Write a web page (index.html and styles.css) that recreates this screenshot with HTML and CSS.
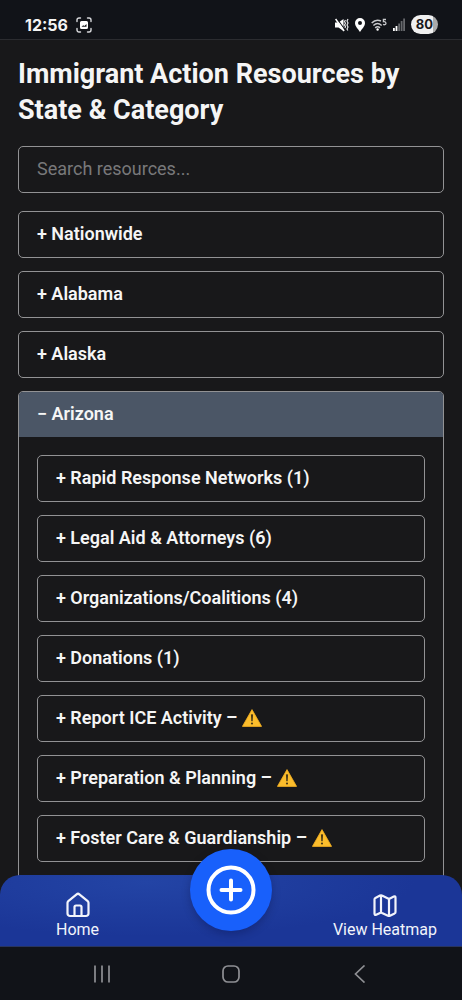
FILE: index.html
```html
<!DOCTYPE html>
<html lang="en">
<head>
<meta charset="utf-8">
<meta name="viewport" content="width=device-width, initial-scale=1">
<title>Immigrant Action Resources</title>
<link rel="stylesheet" href="styles.css">
</head>
<body>
<svg class="defs" aria-hidden="true">
  <symbol id="warning" viewBox="0 0 20 18">
    <path d="M10 .6 19.6 17.4H.4Z" fill="#fbbd2c" stroke="#f6b021" stroke-width=".8" stroke-linejoin="round"/>
    <path d="M8.9 5.6Q10 4.8 11.1 5.6L10.7 12.2H9.3Z" fill="#4a3a18"/>
    <circle cx="10" cy="14.5" r="1.1" fill="#4a3a18"/>
  </symbol>
</svg>
<div class="app">
  <header class="status">
    <div class="status-group">
      <span class="clock">12:56</span>
      <svg width="16" height="16" viewBox="0 0 16 16" fill="none" stroke="#d8d9dc" stroke-width="1.4" stroke-linecap="round">
        <path d="M1 4.5V3a2 2 0 0 1 2-2h1.500M11.500 1H13a2 2 0 0 1 2 2v1.500M15 11.500V13a2 2 0 0 1-2 2h-1.500M4.500 15H3a2 2 0 0 1-2-2v-1.500"/>
        <path d="M5.500 4h5A1.500 1.500 0 0 1 12 5.500v5A1.500 1.500 0 0 1 10.500 12h-5A1.500 1.500 0 0 1 4 10.500v-5A1.500 1.500 0 0 1 5.500 4Z" fill="#fff" stroke="none"/>
        <path d="m5.500 9.700 1.700-1.500 1.200.8 2.100-2v2.700Z" fill="#15171b" stroke="none"/>
      </svg>
    </div>
    <div class="status-group status-icons">
      <svg width="14" height="14" viewBox="0 0 14 14">
        <path d="M0 4.500h3.500L8.500 1v12L3.500 9.500H0Z" fill="#fff"/>
        <path d="m1.800 .5 8 11" stroke="#111318" stroke-width="1.200"/>
        <path d="m.6 1 8.500 12" stroke="#fff" stroke-width="1.500"/>
        <path d="m10.500 2-1 1.500 1 1.700-1 1.700 1 1.700-.5 1.500M13 1l-1 2 1 2-1 2 1 2-1 2 .8 1.500" fill="none" stroke="#e4e4e6" stroke-width="1.200"/>
      </svg>
      <svg width="10" height="14" viewBox="0 0 10 14"><path fill="#fff" fill-rule="evenodd" d="M5 0a5 5 0 0 1 5 5c0 3.500-3.200 6-5 9-1.800-3-5-5.500-5-9a5 5 0 0 1 5-5Zm0 3a2 2 0 1 0 0 4 2 2 0 0 0 0-4Z"/></svg>
      <svg width="16" height="14" viewBox="0 0 16 14" fill="none" stroke="#c8c9cc" stroke-width="1.500">
        <path d="M.7 5C3.500 2 7 1.600 10 3M2.400 7.500C5 5 8 5 10.700 7.500M4.200 9.900c1.600-1.500 3.200-1.500 4.800 0"/>
        <circle cx="6.600" cy="11.500" r="1.200" fill="#fff" stroke="none"/>
        <path d="M15 1.500h-2.600v2.200c2.800-.7 3.400 2.700 1.300 3-.7.100-1.200-.1-1.600-.5" stroke-width="1.300"/>
      </svg>
      <svg width="12" height="13" viewBox="0 0 12 13">
        <path d="M0 10h1.800v3H0ZM2.600 8h1.800v5H2.600Z" fill="#fff"/>
        <path d="M5.200 5.500H7V13H5.200ZM7.700 3h1.800v10H7.700ZM10.200.5H12V13h-1.800Z" fill="#66686c"/>
      </svg>
      <span class="battery">80</span>
    </div>
  </header>

  <main class="content">
    <h1>Immigrant Action Resources by State &amp; Category</h1>
    <input class="search" type="search" placeholder="Search resources..." aria-label="Search resources">
    <div class="list">
      <button class="row" type="button">+ Nationwide</button>
      <button class="row" type="button">+ Alabama</button>
      <button class="row" type="button">+ Alaska</button>
      <section class="state">
        <button class="state-head" type="button" aria-expanded="true">− Arizona</button>
        <div class="list categories">
          <button class="row" type="button">+ Rapid Response Networks (1)</button>
          <button class="row" type="button">+ Legal Aid &amp; Attorneys (6)</button>
          <button class="row" type="button">+ Organizations/Coalitions (4)</button>
          <button class="row" type="button">+ Donations (1)</button>
          <button class="row" type="button">+ Report ICE Activity – <svg class="warn" role="img" aria-label="Warning"><use href="#warning"/></svg></button>
          <button class="row" type="button">+ Preparation &amp; Planning – <svg class="warn" role="img" aria-label="Warning"><use href="#warning"/></svg></button>
          <button class="row" type="button">+ Foster Care &amp; Guardianship – <svg class="warn" role="img" aria-label="Warning"><use href="#warning"/></svg></button>
        </div>
      </section>
    </div>
  </main>

  <footer class="bottom">
    <nav class="tabs">
      <a class="tab" href="#home">
        <svg width="26" height="26" viewBox="0 0 26 26" fill="none" stroke="currentColor" stroke-width="2.200" stroke-linejoin="round" stroke-linecap="round">
          <path d="M2.500 10.800q0-1 .8-1.700l8.300-6.800q1.400-1.100 2.800 0l8.300 6.800q.8.700.8 1.700v10.700a2.500 2.500 0 0 1-2.500 2.500H5a2.500 2.500 0 0 1-2.500-2.500Z"/>
          <path d="M9.500 24v-9a1.500 1.500 0 0 1 1.500-1.500h4a1.500 1.500 0 0 1 1.500 1.500v9"/>
        </svg>
        <span>Home</span>
      </a>
      <a class="tab" href="#heatmap">
        <svg width="26" height="26" viewBox="0 0 26 26" fill="none" stroke="currentColor" stroke-width="2.200" stroke-linejoin="round" stroke-linecap="round">
          <path d="M16 6.400q1 .5 2 0l3.800-1.900q1.700-.6 1.700 1.200v14.200q0 1-.9 1.500L18 23.700q-1 .5-2 0l-6-2.800q-1-.5-2 0l-3.800 1.900q-1.700.6-1.700-1.200V7.400q0-1 .9-1.500L8 3.600q1-.5 2 0ZM9 3.400v17M17 6.700v17"/>
        </svg>
        <span>View Heatmap</span>
      </a>
      <button class="fab" type="button" aria-label="Add resource">
        <svg width="50" height="50" viewBox="0 0 50 50" fill="none" stroke="#fff" stroke-width="4" stroke-linecap="round">
          <circle cx="25" cy="25" r="22.500"/>
          <path d="M25 15.500v19M15.500 25h19"/>
        </svg>
      </button>
    </nav>
    <div class="system">
      <button type="button" aria-label="Recent apps"><svg width="18" height="18" viewBox="0 0 18 18" stroke="#8f9094" stroke-width="1.700"><path d="M2 .5v17M9 .5v17M16 .5v17"/></svg></button>
      <button type="button" aria-label="Home screen"><svg width="18" height="18" viewBox="0 0 18 18" fill="none" stroke="#8f9094" stroke-width="1.700"><rect x="1" y="1" width="16" height="16" rx="5"/></svg></button>
      <button type="button" aria-label="Back"><svg width="18" height="18" viewBox="0 0 18 18" fill="none" stroke="#8f9094" stroke-width="1.700"><path d="M13.500.5 4.500 9l9 8.500"/></svg></button>
    </div>
  </footer>
</div>
</body>
</html>
```
FILE: styles.css
```css
* {
  box-sizing: border-box;
}

body {
  margin: 0;
  background: #18181a;
  color: #f5f5f5;
  font-family: Roboto, "Liberation Sans", sans-serif;
}

button,
input {
  font: inherit;
  color: inherit;
}

.defs {
  position: absolute;
  width: 0;
  height: 0;
}

.app {
  display: flex;
  flex-direction: column;
  height: 100vh;
}

.status {
  display: flex;
  flex: none;
  align-items: center;
  justify-content: space-between;
  padding: 12px 24px 2px 25px;
  height: 40px;
  background: #111318;
  border-bottom: 1px solid #2b2c30;
}

.status-group {
  display: flex;
  align-items: center;
  gap: 8px;
}

.status-icons {
  gap: 6px;
}

.clock {
  font-family: Inter, Roboto, sans-serif;
  font-size: 16px;
  font-weight: 700;
}

.battery {
  padding: 0 5px;
  border-radius: 10px;
  background: linear-gradient(90deg, #f0f0f0 80%, #aaa 80%);
  color: #18181a;
  font-family: Inter, Roboto, sans-serif;
  font-size: 13px;
  font-weight: 700;
  line-height: 19px;
}

.content {
  flex: 1;
  min-height: 0;
  overflow: hidden;
  padding: 16px 18px 0;
}

h1 {
  margin: 0 0 18px;
  font-size: 27px;
  font-weight: 700;
  line-height: 36px;
}

.search,
.row {
  display: block;
  width: 100%;
  height: 47px;
  padding: 0 18px 2px;
  border: 1px solid #929294;
  border-radius: 5px;
  background: transparent;
  font-size: 18px;
  text-align: left;
}

.search {
  margin-bottom: 18px;
  appearance: none;
}

.search::placeholder {
  color: #78787a;
  opacity: 1;
}

.row,
.state-head {
  font-weight: 600;
}

.list {
  display: flex;
  flex-direction: column;
  gap: 13px;
}

.state {
  overflow: hidden;
  border: 1px solid #929294;
  border-radius: 5px;
}

.state-head {
  display: block;
  width: 100%;
  height: 45px;
  padding: 0 18px 2px;
  border: 0;
  background: #4b5666;
  font-size: 18px;
  text-align: left;
}

.categories {
  padding: 18px;
}

.warn {
  width: 20px;
  height: 18px;
  vertical-align: -3px;
}

.bottom {
  position: absolute;
  right: 0;
  bottom: 0;
  left: 0;
}

.tabs {
  position: relative;
  display: flex;
  justify-content: space-between;
  padding: 17px 25px 6px 56px;
  border-radius: 20px 20px 0 0;
  background: radial-gradient(ellipse at 32% 10%, #2344a5, #1b3697 60%);
  border-bottom: 1px solid #28345f;
}

.tab {
  display: flex;
  flex-direction: column;
  align-items: center;
  gap: 2px;
  color: #f2f4fb;
  font-size: 16px;
  line-height: 20px;
  text-decoration: none;
}

.fab {
  position: absolute;
  top: -26px;
  left: 50%;
  display: grid;
  place-items: center;
  width: 82px;
  height: 82px;
  margin-left: -41px;
  padding: 0;
  border: 0;
  border-radius: 50%;
  background: #1860fb;
  box-shadow: 0 3px 8px rgb(0 0 40 / 25%);
}

.system {
  display: flex;
  align-items: center;
  justify-content: space-around;
  height: 53px;
  padding: 0 37px;
  background: #111318;
}

.system button {
  display: grid;
  padding: 0;
  border: 0;
  background: none;
}
```
